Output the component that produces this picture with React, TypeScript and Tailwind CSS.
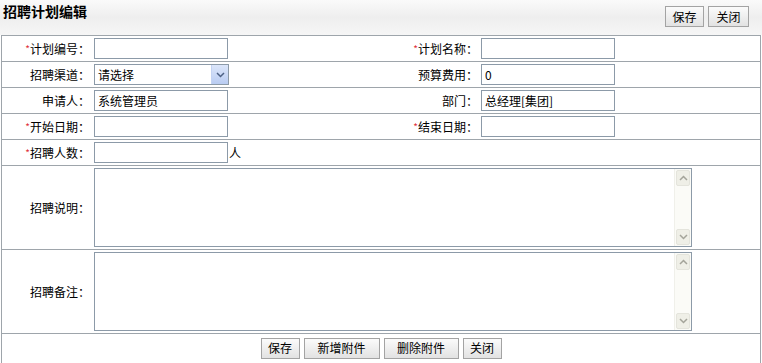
import React from "react";

const font = { fontFamily: '"Noto Sans CJK SC", "Liberation Sans", sans-serif' };

function Req() {
  return <span className="text-[#e0303a] text-[10px] align-top">*</span>;
}

function Label({ text, req }: { text: string; req?: boolean }) {
  return (
    <div className="flex items-center justify-end pr-[1px] text-[12px] text-black whitespace-nowrap">
      {req && <Req />}
      {text}：
    </div>
  );
}

function Field({ value = "", suffix }: { value?: string; suffix?: string }) {
  return (
    <div className="flex items-center">
      <input
        readOnly
        value={value}
        className="w-[134px] h-[21px] border border-[#8c9aa8] bg-white px-[3px] text-[12px] text-black outline-none"
        style={font}
      />
      {suffix && <span className="text-[12px] ml-[1px]">{suffix}</span>}
    </div>
  );
}

function Btn({ text, w }: { text: string; w: string }) {
  return (
    <button
      className={`${w} h-[21px] border border-[#a3a3a3] bg-gradient-to-b from-[#fbfbfb] to-[#e2e2e2] text-[12px] text-black leading-none`}
      style={font}
    >
      {text}
    </button>
  );
}

function Chevron({ up, color = "#a4a49a" }: { up?: boolean; color?: string }) {
  return (
    <svg width="9" height="6" viewBox="0 0 9 6">
      <path
        d={up ? "M1 5 L4.5 1.5 L8 5" : "M1 1 L4.5 4.5 L8 1"}
        fill="none"
        stroke={color}
        strokeWidth="1.5"
      />
    </svg>
  );
}

function Memo() {
  return (
    <div className="flex w-[598px] h-[79px] border border-[#8c9aa8] bg-white">
      <textarea readOnly className="flex-1 resize-none outline-none" />
      <div className="w-[17px] flex flex-col justify-between bg-[#fbfbf7] border-l border-[#f0f0ea] p-[1px]">
        <div className="h-[16px] flex items-center justify-center bg-[#efefe7] border border-[#e4e4dc] rounded-[2px]">
          <Chevron up />
        </div>
        <div className="h-[16px] flex items-center justify-center bg-[#efefe7] border border-[#e4e4dc] rounded-[2px]">
          <Chevron />
        </div>
      </div>
    </div>
  );
}

const row = "grid grid-cols-[89px_290px_98px_1fr] h-[26px] border-b border-[#9ea5ab]";

export default function App() {
  return (
    <div className="w-[762px] h-[363px] bg-white overflow-hidden text-black" style={font}>
      <div className="h-[35px] bg-gradient-to-b from-[#fafafa] via-[#eeeeee] to-[#f6f6f6] flex justify-between items-start">
        <h1 className="text-[14px] font-bold pl-[3px] pt-[1px] leading-[20px]">招聘计划编辑</h1>
        <div className="flex gap-[4px] pt-[6px] pr-[13px]">
          <Btn text="保存" w="w-[39px]" />
          <Btn text="关闭" w="w-[41px]" />
        </div>
      </div>

      <div className="ml-[1px] w-[760px] border-l border-r border-t border-[#9ea5ab]">
        <div className={row}>
          <Label text="计划编号" req />
          <div className="pl-[3px] flex items-center"><Field /></div>
          <Label text="计划名称" req />
          <div className="pl-[2px] flex items-center"><Field /></div>
        </div>
        <div className={row}>
          <Label text="招聘渠道" />
          <div className="pl-[3px] flex items-center">
            <div className="w-[135px] h-[21px] border border-[#8c9aa8] bg-white flex items-center">
              <span className="flex-1 pl-[3px] text-[12px]">请选择</span>
              <div className="w-[17px] h-[19px] bg-gradient-to-b from-[#dce6fa] to-[#b9ccf2] flex items-center justify-center border-l border-[#c3d3f3]">
                <Chevron color="#4d6185" />
              </div>
            </div>
          </div>
          <Label text="预算费用" />
          <div className="pl-[2px] flex items-center"><Field value="0" /></div>
        </div>
        <div className={row}>
          <Label text="申请人" />
          <div className="pl-[3px] flex items-center"><Field value="系统管理员" /></div>
          <Label text="部门" />
          <div className="pl-[2px] flex items-center"><Field value="总经理[集团]" /></div>
        </div>
        <div className={row}>
          <Label text="开始日期" req />
          <div className="pl-[3px] flex items-center"><Field /></div>
          <Label text="结束日期" req />
          <div className="pl-[2px] flex items-center"><Field /></div>
        </div>
        <div className={row}>
          <Label text="招聘人数" req />
          <div className="pl-[3px] flex items-center"><Field suffix="人" /></div>
          <div />
          <div />
        </div>
        <div className="grid grid-cols-[89px_1fr] h-[84px] border-b border-[#9ea5ab]">
          <Label text="招聘说明" />
          <div className="pl-[3px] flex items-center"><Memo /></div>
        </div>
        <div className="grid grid-cols-[89px_1fr] h-[84px] border-b border-[#9ea5ab]">
          <Label text="招聘备注" />
          <div className="pl-[3px] flex items-center"><Memo /></div>
        </div>
        <div className="h-[30px] flex justify-center items-center gap-[4px] pb-[2px]">
          <Btn text="保存" w="w-[39px]" />
          <Btn text="新增附件" w="w-[76px]" />
          <Btn text="删除附件" w="w-[75px]" />
          <Btn text="关闭" w="w-[39px]" />
        </div>
      </div>
    </div>
  );
}
